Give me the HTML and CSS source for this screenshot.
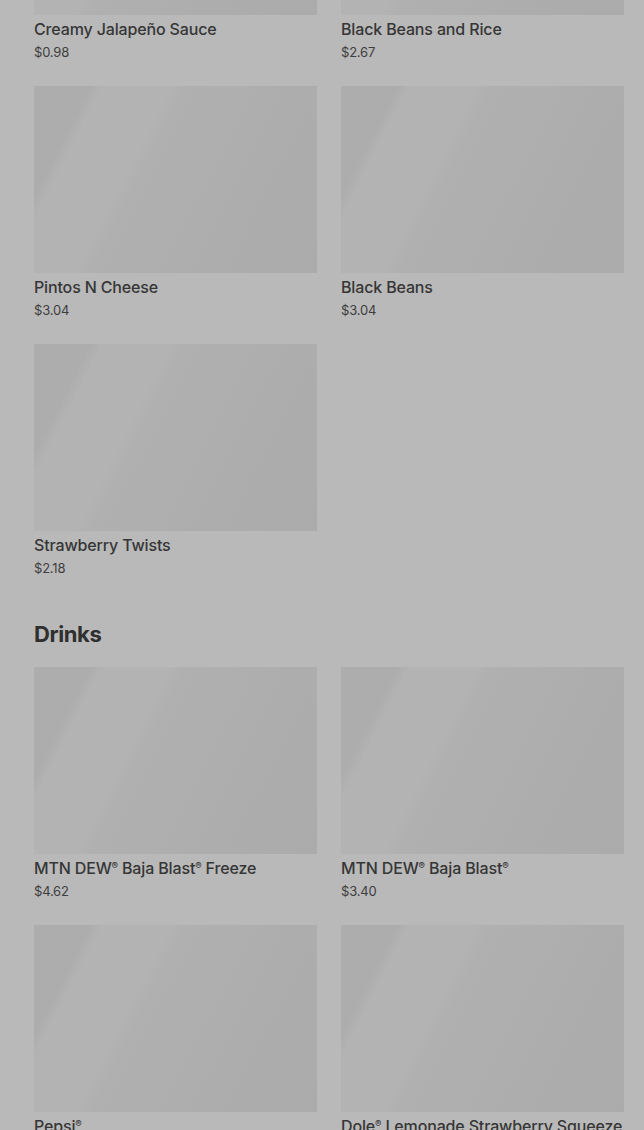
FILE: index.html
```html
<!DOCTYPE html>
<html lang="en">
<head>
    <meta charset="UTF-8">
    <meta name="viewport" content="width=device-width, initial-scale=1.0">
    <title>Menu</title>
    <link rel="stylesheet" href="styles.css">
</head>
<body>
    <div class="menu">
        <div class="section">
            <div class="grid">
                <div class="item">
                    <div class="thumb"></div>
                    <div class="name">Creamy Jalapeño Sauce</div>
                    <div class="price">$0.98</div>
                </div>
                <div class="item">
                    <div class="thumb"></div>
                    <div class="name">Black Beans and Rice</div>
                    <div class="price">$2.67</div>
                </div>
                <div class="item">
                    <div class="thumb"></div>
                    <div class="name">Pintos N Cheese</div>
                    <div class="price">$3.04</div>
                </div>
                <div class="item">
                    <div class="thumb"></div>
                    <div class="name">Black Beans</div>
                    <div class="price">$3.04</div>
                </div>
                <div class="item">
                    <div class="thumb"></div>
                    <div class="name">Strawberry Twists</div>
                    <div class="price">$2.18</div>
                </div>
            </div>
        </div>
        <div class="section">
            <h2>Drinks</h2>
            <div class="grid">
                <div class="item">
                    <div class="thumb"></div>
                    <div class="name">MTN DEW<span class="reg">®</span> Baja Blast<span class="reg">®</span> Freeze</div>
                    <div class="price">$4.62</div>
                </div>
                <div class="item">
                    <div class="thumb"></div>
                    <div class="name">MTN DEW<span class="reg">®</span> Baja Blast<span class="reg">®</span></div>
                    <div class="price">$3.40</div>
                </div>
                <div class="item">
                    <div class="thumb"></div>
                    <div class="name">Pepsi<span class="reg">®</span></div>
                    <div class="price">$3.40</div>
                </div>
                <div class="item">
                    <div class="thumb"></div>
                    <div class="name">Dole<span class="reg">®</span> Lemonade Strawberry Squeeze</div>
                    <div class="price">$4.62</div>
                </div>
            </div>
        </div>
    </div>
</body>
</html>
```

FILE: styles.css
```css
body {
    margin: 0;
    padding: 0;
    background-color: #b9b9b9;
    font-family: 'Inter', 'Liberation Sans', sans-serif;
    color: #363636;
    overflow: hidden;
}
.menu {
    margin-top: -172px;
    padding: 0 20px 0 34px;
}
.section + .section {
    margin-top: 41px;
}
.section h2 {
    margin: 0 0 17px 0;
    font-size: 22px;
    line-height: 32px;
    font-weight: 700;
    color: #2f2f2f;
    letter-spacing: -0.4px;
}
.grid {
    display: grid;
    grid-template-columns: 283px 283px;
    column-gap: 24px;
    row-gap: 25px;
}
.thumb {
    height: 187px;
    background: linear-gradient(117deg, #adadad 0%, #adadad 15%, #b3b3b3 18%, #b3b3b3 36%, #b0b0b0 40%, #adadad 70%, #ababab 100%);
}
.name {
    margin-top: 4px;
    font-size: 16px;
    line-height: 20px;
    font-weight: 500;
    letter-spacing: -0.15px;
    white-space: nowrap;
}
.reg {
    font-size: 0.6em;
    vertical-align: 0.5em;
    line-height: 0;
}
.price {
    margin-top: 4px;
    font-size: 13px;
    line-height: 18px;
    letter-spacing: -0.2px;
    color: #3e3e3e;
}
```
